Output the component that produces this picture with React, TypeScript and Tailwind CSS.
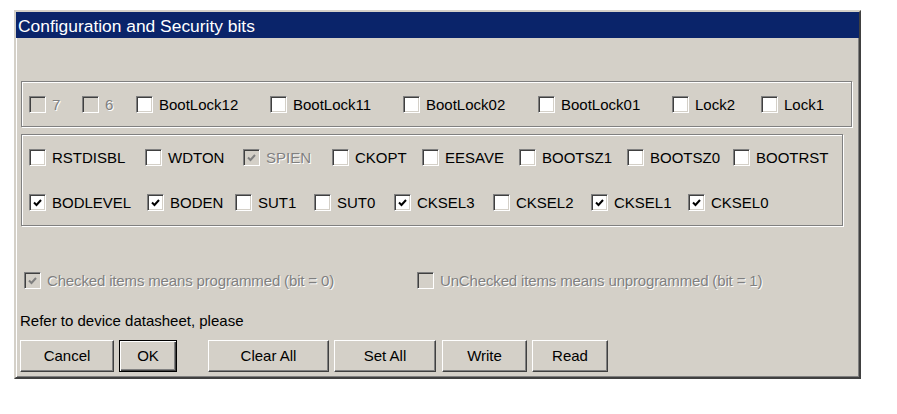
import React from 'react';

type Bit = {
  label: string;
  width: string;
  checked?: boolean;
  disabled?: boolean;
};

const lockBits: Bit[] = [
  { label: '7', width: 'w-[53px]', disabled: true },
  { label: '6', width: 'w-[54px]', disabled: true },
  { label: 'BootLock12', width: 'w-[134px]' },
  { label: 'BootLock11', width: 'w-[133px]' },
  { label: 'BootLock02', width: 'w-[135px]' },
  { label: 'BootLock01', width: 'w-[134px]' },
  { label: 'Lock2', width: 'w-[89px]' },
  { label: 'Lock1', width: 'w-auto' },
];

const highFuses: Bit[] = [
  { label: 'RSTDISBL', width: 'w-[116px]' },
  { label: 'WDTON', width: 'w-[98px]' },
  { label: 'SPIEN', width: 'w-[89px]', checked: true, disabled: true },
  { label: 'CKOPT', width: 'w-[90px]' },
  { label: 'EESAVE', width: 'w-[97px]' },
  { label: 'BOOTSZ1', width: 'w-[108px]' },
  { label: 'BOOTSZ0', width: 'w-[106px]' },
  { label: 'BOOTRST', width: 'w-auto' },
];

const lowFuses: Bit[] = [
  { label: 'BODLEVEL', width: 'w-[118px]', checked: true },
  { label: 'BODEN', width: 'w-[88px]', checked: true },
  { label: 'SUT1', width: 'w-[79px]' },
  { label: 'SUT0', width: 'w-[80px]' },
  { label: 'CKSEL3', width: 'w-[99px]', checked: true },
  { label: 'CKSEL2', width: 'w-[98px]' },
  { label: 'CKSEL1', width: 'w-[97px]', checked: true },
  { label: 'CKSEL0', width: 'w-auto', checked: true },
];

const buttons = [
  { label: 'Cancel', width: 'w-[94px]', gap: 'ml-0' },
  { label: 'OK', width: 'w-[58px]', gap: 'ml-[5px]', isDefault: true },
  { label: 'Clear All', width: 'w-[121px]', gap: 'ml-[31px]' },
  { label: 'Set All', width: 'w-[102px]', gap: 'ml-[5px]' },
  { label: 'Write', width: 'w-[85px]', gap: 'ml-[6px]' },
  { label: 'Read', width: 'w-[76px]', gap: 'ml-[5px]' },
];

const disabledText = 'text-[#808080] [text-shadow:1px_1px_0_#ffffff]';

function CheckBox({ checked, disabled }: { checked?: boolean; disabled?: boolean }) {
  return (
    <span
      className={`flex w-[17px] h-[17px] shrink-0 items-center justify-center border border-t-[#808080] border-l-[#808080] border-b-white border-r-white shadow-[inset_1px_1px_0_#404040,inset_-1px_-1px_0_#d4d0c8] ${
        disabled ? 'bg-[#d4d0c8]' : 'bg-white'
      }`}
    >
      {checked && (
        <svg width="9" height="8" viewBox="0 0 9 8" className="mt-[1px]">
          <path
            d="M1 3.5 L3.5 6 L8 1"
            fill="none"
            stroke={disabled ? '#808080' : '#000000'}
            strokeWidth="2"
          />
        </svg>
      )}
    </span>
  );
}

function BitItem({ bit }: { bit: Bit }) {
  return (
    <label className={`flex h-[17px] items-center gap-[6px] ${bit.width}`}>
      <CheckBox checked={bit.checked} disabled={bit.disabled} />
      <span className={`whitespace-nowrap leading-none ${bit.disabled ? disabledText : 'text-black'}`}>
        {bit.label}
      </span>
    </label>
  );
}

function BitRow({ bits }: { bits: Bit[] }) {
  return (
    <div className="flex items-center pl-[7px]">
      {bits.map((b) => (
        <BitItem key={b.label} bit={b} />
      ))}
    </div>
  );
}

export default function App() {
  return (
    <div className="w-[897px] h-[414px] bg-white pl-[14px] pt-[10px] font-['Liberation_Sans',Arial,sans-serif] text-[15px]">
      <div className="flex w-[847px] h-[369px] flex-col bg-[#d4d0c8] border-2 border-t-[#d4d0c8] border-l-[#d4d0c8] border-b-[#404040] border-r-[#404040] shadow-[inset_1px_1px_0_#ffffff,inset_-1px_-1px_0_#808080]">
        <div className="flex h-[26px] items-center bg-[#0a246a] pl-[2px] pt-[3px] text-[17.4px] text-white">
          Configuration and Security bits
        </div>

        <div className="ml-[5px] mt-[43px] flex h-[46px] w-[831px] items-center border border-[#808080] shadow-[inset_1px_1px_0_#ffffff,1px_1px_0_#ffffff]">
          <BitRow bits={lockBits} />
        </div>

        <div className="ml-[5px] mt-[7px] flex h-[92px] w-[822px] flex-col gap-[28px] border border-[#808080] pt-[14px] shadow-[inset_1px_1px_0_#ffffff,1px_1px_0_#ffffff]">
          <BitRow bits={highFuses} />
          <BitRow bits={lowFuses} />
        </div>

        <div className="ml-[8px] mt-[46px] flex h-[17px] items-center tracking-[-0.15px]">
          <BitItem bit={{ label: 'Checked items means programmed (bit = 0)', width: 'w-[393px]', checked: true, disabled: true }} />
          <BitItem bit={{ label: 'UnChecked items means unprogrammed (bit = 1)', width: 'w-auto', disabled: true }} />
        </div>

        <div className="ml-[4px] mt-[23px] h-[18px] leading-[18px] text-black">Refer to device datasheet, please</div>

        <div className="ml-[4px] mt-[10px] flex">
          {buttons.map((b) => (
            <button
              key={b.label}
              type="button"
              className={`flex h-[32px] items-center justify-center text-black ${b.width} ${b.gap} ${
                b.isDefault
                  ? 'border border-black shadow-[inset_1px_1px_0_#ffffff,inset_-1px_-1px_0_#404040,inset_-2px_-2px_0_#808080]'
                  : 'border border-t-white border-l-white border-b-[#404040] border-r-[#404040] shadow-[inset_-1px_-1px_0_#808080]'
              }`}
            >
              {b.label}
            </button>
          ))}
        </div>
      </div>
    </div>
  );
}
